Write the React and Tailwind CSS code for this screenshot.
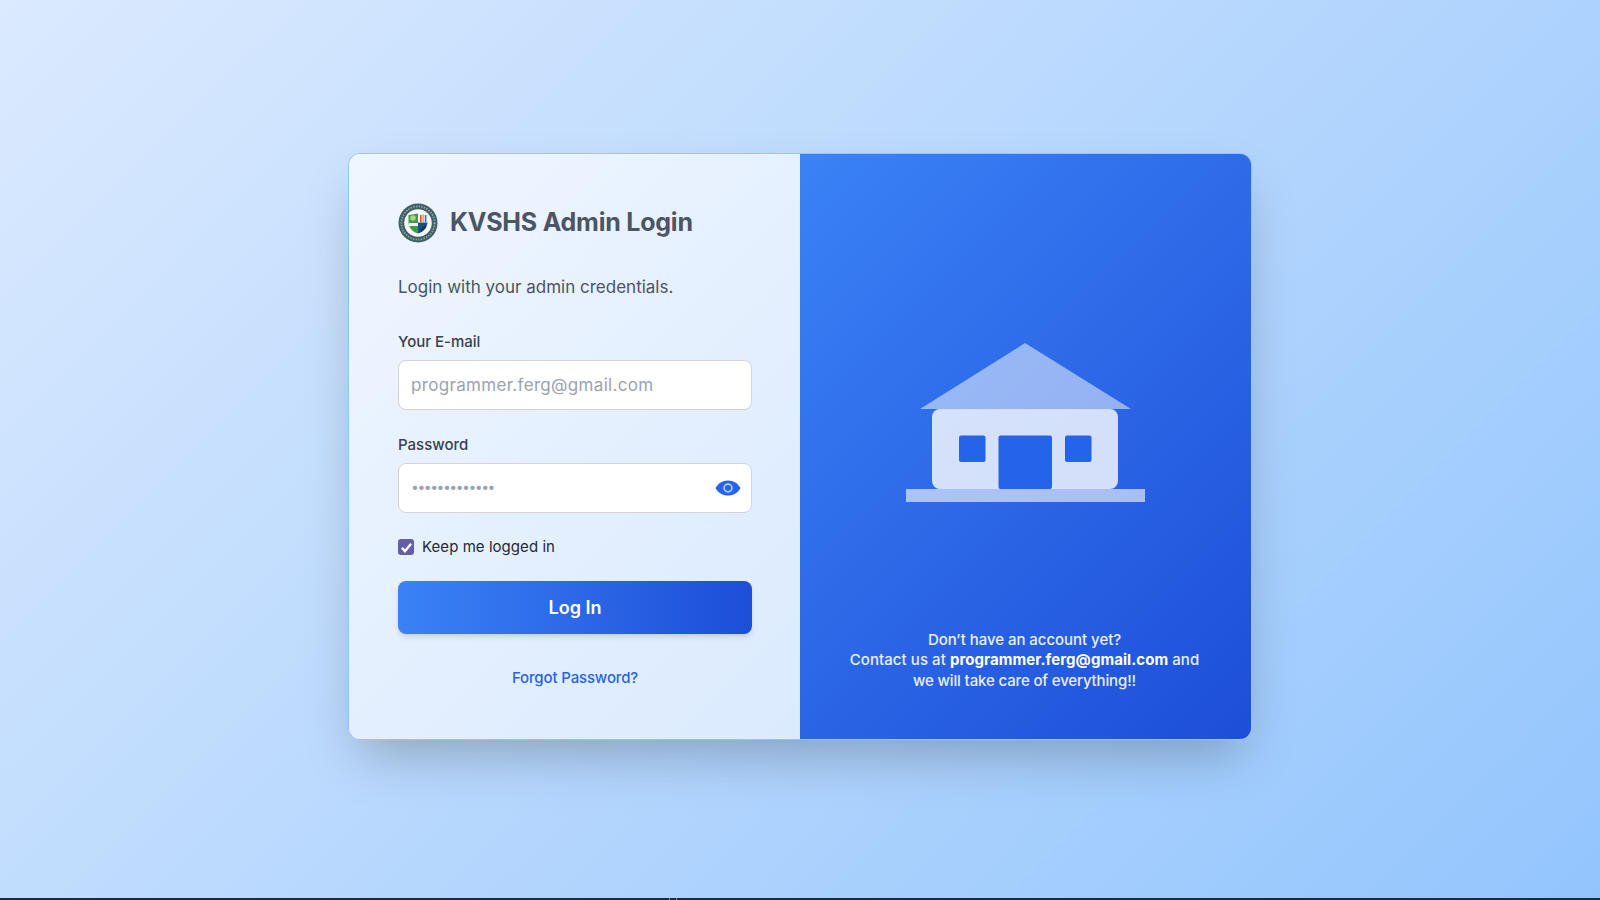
import React from "react";

function Logo() {
  return (
    <svg width="40" height="40" viewBox="0 0 40 40" className="shrink-0">
      <circle cx="20" cy="20" r="19.5" fill="#3f5f66" />
      <circle cx="20" cy="20" r="16.6" fill="none" stroke="#8fa6a9" strokeWidth="1.8" strokeDasharray="1.4 1.3" />
      <circle cx="20" cy="20" r="13.8" fill="#f6f8f7" />
      <path d="M10.5 12 L20 10.5 L20 30.5 C14.5 29 11 25 10.5 19.5 Z" fill="#3f9a4a" />
      <path d="M20 19.5 L29.5 19.5 C29 25 25.5 29 20 30.5 Z" fill="#1d4f7c" />
      <rect x="22" y="12" width="1.7" height="7" fill="#e0533d" />
      <rect x="24.4" y="11.5" width="1.7" height="7.5" fill="#e6b53a" />
      <rect x="26.8" y="12" width="1.7" height="7" fill="#3a7fc2" />
      <circle cx="15" cy="15" r="2.8" fill="#a8d57e" />
      <rect x="11" y="20" width="9" height="3" fill="#eef5ea" />
      <path d="M22 27 L28 22 L28 24.5 L23 28.5 Z" fill="#10324f" />
    </svg>
  );
}

function House() {
  return (
    <svg width="240" height="160" viewBox="0 0 240 160" className="mx-auto block">
      <rect x="27" y="66" width="186" height="80" rx="8" fill="#ffffff" fillOpacity="0.8" />
      <path d="M120 0 L226 66 L15 66 Z" fill="#ffffff" fillOpacity="0.5" />
      <rect x="1" y="146" width="239" height="13" fill="#ffffff" fillOpacity="0.6" />
      <rect x="54" y="92.5" width="26.5" height="26.5" rx="2" fill="#2563eb" />
      <rect x="93.5" y="92.5" width="53.5" height="53.5" rx="2" fill="#2563eb" />
      <rect x="160" y="92.5" width="26.5" height="26.5" rx="2" fill="#2563eb" />
    </svg>
  );
}

function Eye() {
  return (
    <svg width="26" height="16" viewBox="0 0 26 16" className="block">
      <path d="M0.5 8 C3 3.2 7.5 0.4 13 0.4 C18.5 0.4 23 3.2 25.5 8 C23 12.8 18.5 15.6 13 15.6 C7.5 15.6 3 12.8 0.5 8 Z" fill="#2563eb" />
      <circle cx="13" cy="8" r="3.9" fill="none" stroke="#b4ccfa" strokeWidth="1.7" />
    </svg>
  );
}

export default function App() {
  return (
    <div className="flex h-screen flex-col overflow-hidden font-['Inter',sans-serif]">
      <main className="flex flex-1 items-center justify-center bg-[linear-gradient(135deg,#dbeafe,#93c5fd)] pb-[5px]">
        <div className="flex h-[587px] w-[904px] overflow-hidden rounded-xl border border-[#93c5fd] shadow-2xl">
          <section className="flex w-[451px] flex-col bg-[linear-gradient(135deg,#eff6ff,#dbeafe)] pt-[49px] pr-[48px] pl-[49px]">
            <div className="flex h-10 items-center gap-3">
              <Logo />
              <h1 className="text-[25px] font-bold tracking-[-0.22px] text-[#4b5563]">KVSHS Admin Login</h1>
            </div>
            <p className="mt-8 text-[17px] leading-6 text-[#4b5563]">Login with your admin credentials.</p>

            <label className="mt-[33px] mb-2 text-[15px] leading-5 font-medium text-[#374151]">Your E-mail</label>
            <input
              className="h-[50px] w-full rounded-lg border border-[#d1d5db] bg-white px-3 text-[17px] tracking-[0.32px] text-[#111827] outline-none placeholder:text-[#9ca3af]"
              placeholder="programmer.ferg@gmail.com"
            />

            <label className="mt-[25px] mb-2 text-[15px] leading-5 font-medium text-[#374151]">Password</label>
            <div className="relative">
              <input
                className="h-[50px] w-full rounded-lg border border-[#d1d5db] bg-white px-3 pb-[3px] text-[14px] tracking-[-1.5px] text-[#111827] outline-none placeholder:text-[#9ca3af]"
                placeholder="•••••••••••••"
              />
              <span className="absolute top-[17px] right-[11px]">
                <Eye />
              </span>
            </div>

            <div className="mt-[23px] flex h-[22px] items-center gap-2">
              <span className="flex h-4 w-4 items-center justify-center rounded-[3px] bg-[#625fa8]">
                <svg width="13" height="13" viewBox="0 0 12 12">
                  <path d="M1.8 6.4 L4.6 9.4 L10.2 2.6" fill="none" stroke="#fff" strokeWidth="2.2" />
                </svg>
              </span>
              <span className="text-[15px] tracking-[0.05px] text-[#1f2937]">Keep me logged in</span>
            </div>

            <button className="mt-[23px] h-[53px] w-full rounded-lg bg-[linear-gradient(90deg,#3b82f6,#1d4ed8)] text-[18px] font-semibold text-white shadow-md">
              Log In
            </button>

            <a className="mt-[34px] text-center text-[15px] leading-5 font-medium tracking-[-0.15px] text-[#2563eb]">Forgot Password?</a>
          </section>

          <section className="flex w-[451px] flex-col bg-[linear-gradient(135deg,#3b82f6,#1d4ed8)] pt-[189px] pr-[33px] pl-[31px] text-center">
            <House />
            <p className="mt-[127px] text-[15px] leading-[20.4px] font-medium tracking-[0.06px] text-white/90">
              <span className="tracking-[-0.04px]">Don’t have an account yet?</span>
              <br />
              Contact us at <b className="font-bold text-white">programmer.ferg@gmail.com</b> and
              <br />
              <span className="tracking-[-0.14px]">we will take care of everything!!</span>
            </p>
          </section>
        </div>
      </main>
      <div className="flex h-[2px] shrink-0 bg-[#1f2937]">
        <span className="ml-[669px] w-px bg-[#8f86b5]" />
        <span className="ml-[6px] w-px bg-[#8f86b5]" />
      </div>
    </div>
  );
}
